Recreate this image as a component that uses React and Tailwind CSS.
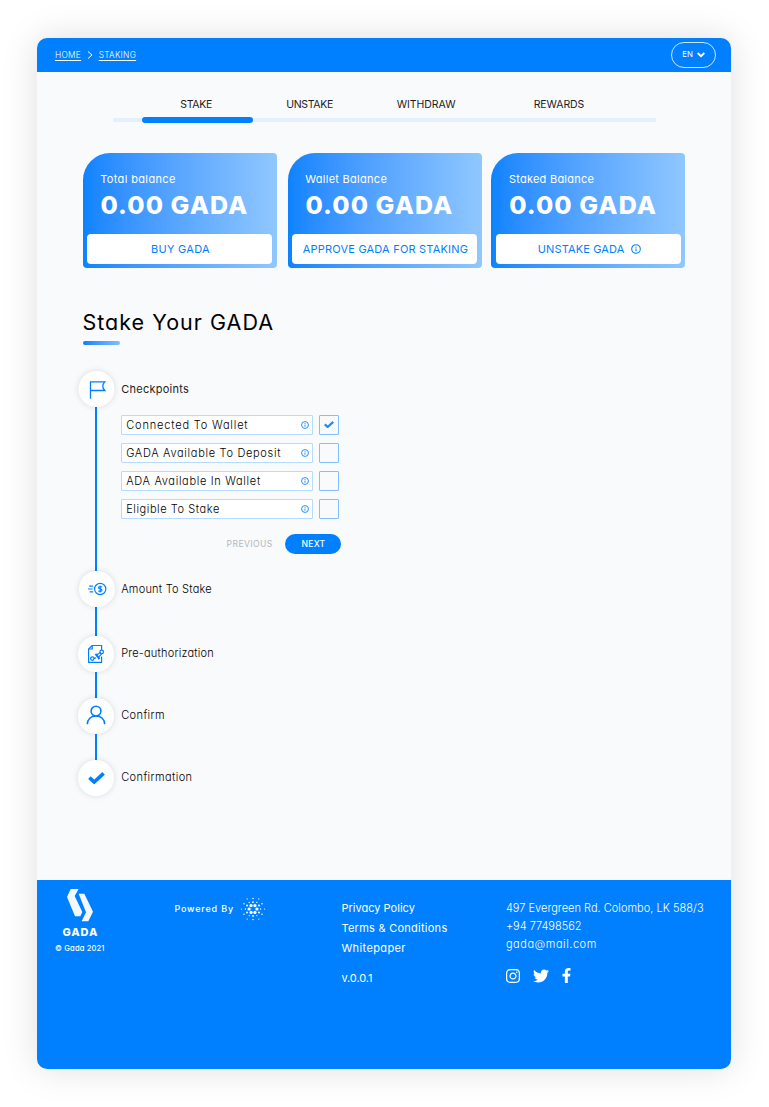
import React from "react";
import { FaInstagram, FaTwitter, FaFacebookF } from "react-icons/fa";

function InfoIcon({ className }) {
  return (
    <svg viewBox="0 0 16 16" fill="none" stroke="currentColor" className={className}>
      <circle cx="8" cy="8" r="6.9" strokeWidth="1.7" />
      <path d="M8 7.2v4.2" strokeWidth="1.8" />
      <path d="M8 4.3v1.6" strokeWidth="1.8" />
    </svg>
  );
}

function CheckIcon({ className }) {
  return (
    <svg viewBox="0 0 16 12" fill="none" stroke="currentColor" className={className}>
      <path d="M1.2 5.4L5.8 9.6L14.8 1.4" strokeWidth="3.5" />
    </svg>
  );
}

function FlagIcon() {
  return (
    <svg viewBox="0 0 18 20" fill="none" stroke="#0080ff" strokeWidth="1.3" className="h-5 w-[18px] translate-x-[1px] translate-y-[1px]">
      <path d="M2 18.8V1.9H16.3Q12.2 6.2 16.3 10.5H2" />
    </svg>
  );
}

function CoinIcon() {
  return (
    <svg viewBox="0 0 20 14" fill="none" stroke="#0080ff" strokeWidth="1.2" className="h-3.5 w-5">
      <circle cx="13.2" cy="7" r="5.6" />
      <path d="M2.2 4.2H6.2M1 7H5.6M2.6 9.8H6.2" />
      <path d="M15 5.3C14.7 4.7 14 4.5 13.2 4.5C12.2 4.5 11.5 5 11.5 5.7C11.5 7.4 15 6.5 15 8.3C15 9.1 14.2 9.5 13.2 9.5C12.3 9.5 11.6 9.2 11.4 8.6M13.2 3.5V10.5" />
    </svg>
  );
}

function DocumentIcon() {
  return (
    <svg viewBox="0 0 18 20" fill="none" stroke="#0080ff" strokeWidth="1.2" className="h-5 w-[18px]">
      <path d="M14.6 6V1.5H5.2L1.6 5V18.3H14.6V12.5" />
      <path d="M5.2 1.5V5H1.6" />
      <circle cx="5.3" cy="14.6" r="1.7" />
      <path d="M6.9 14.4L9 13.8M8.2 10.2L12.2 15.4M8.9 9.6L12.8 14.7M9.7 10.8L11.6 9.7L13.5 8.1M11.7 13L13.4 11.1L15 9.4" />
      <circle cx="14.7" cy="7.9" r="1.8" />
    </svg>
  );
}

function PersonIcon() {
  return (
    <svg viewBox="0 0 20 20" fill="none" stroke="#0080ff" strokeWidth="1.6" className="h-5 w-5 -translate-y-px">
      <circle cx="10" cy="6.1" r="4.9" />
      <path d="M1.3 19.3C1.3 14.3 5 11 10 11S18.7 14.3 18.7 19.3" />
    </svg>
  );
}

const rings = [
  { radius: 3.9, size: 1.6, count: 6, offset: 0 },
  { radius: 6.9, size: 0.95, count: 6, offset: 30 },
  { radius: 7.6, size: 0.65, count: 6, offset: 0 },
  { radius: 10.4, size: 0.75, count: 6, offset: 30 },
  { radius: 11.6, size: 0.6, count: 6, offset: 0 },
];

function CardanoLogo() {
  return (
    <svg viewBox="-13 -13 26 26" fill="white" className="h-[26px] w-[26px]">
      {rings.flatMap((ring, r) =>
        Array.from({ length: ring.count }, (_, i) => {
          const a = ((ring.offset + (360 / ring.count) * i) * Math.PI) / 180;
          return <circle key={`${r}-${i}`} cx={ring.radius * Math.cos(a)} cy={ring.radius * Math.sin(a)} r={ring.size} />;
        })
      )}
    </svg>
  );
}

function BalanceCard({ label, labelClass, action, actionClass, info }) {
  return (
    <div className="flex h-[115px] w-[194px] flex-col rounded-[4px] rounded-tl-[27px] bg-linear-to-r from-[#0a83ff] to-[#90c7ff] px-[4.5px] pt-[18px] pb-1 text-white">
      <div className={`pl-[13px] text-[11px] leading-[16px] ${labelClass}`}>{label}</div>
      <div className="mt-[3.5px] pl-[13.3px] text-[25px] leading-[28px] font-extrabold tracking-[1.1px]">0.00 GADA</div>
      <button className="mt-auto flex h-[30.5px] items-center justify-center rounded-[4px] bg-white pl-[1.5px] text-[11px] text-[#0080ff]">
        <span className={`whitespace-nowrap ${actionClass}`}>{action}</span>
        {info && <InfoIcon className="ml-[6px] h-2.5 w-2.5" />}
      </button>
    </div>
  );
}

function Checkpoint({ label, labelClass, checked }) {
  return (
    <div className="flex gap-[6px]">
      <div className="flex h-5 w-[192px] items-center justify-between rounded-[1px] border border-[#b5dcff] bg-white pr-[3.5px] pl-[4px]">
        <span className={`text-[11px] leading-[18px] font-light whitespace-nowrap text-black ${labelClass}`}>{label}</span>
        <InfoIcon className="h-2 w-2 text-[#0080ff]" />
      </div>
      <div className="flex h-5 w-[20px] items-center justify-center rounded-[1px] border border-[#80c0ff] text-[#1a8cff]">
        {checked && <CheckIcon className="h-[7.5px] w-2.5" />}
      </div>
    </div>
  );
}

function Step({ icon, label, labelClass, height, shift, last, children }) {
  return (
    <div className={`flex ${height}`}>
      <div className="flex w-9 flex-col items-center">
        <div className={`flex h-9 w-9 shrink-0 items-center justify-center rounded-full bg-white shadow-[0_0_6px_rgba(0,0,0,0.13)] ${shift}`}>{icon}</div>
        {!last && <div className="w-[2.5px] flex-1 bg-[#0080ff]" />}
      </div>
      <div className="ml-[7px]">
        <div className={`flex h-9 items-center text-[11px] whitespace-nowrap ${labelClass}`}>{label}</div>
        {children}
      </div>
    </div>
  );
}

export default function App() {
  return (
    <div className="h-[1107px] w-[769px] overflow-hidden bg-white pt-[37.5px] pl-[37.4px] font-['Inter',sans-serif] text-black [font-feature-settings:'cv11']">
      <div className="flex h-[1031.9px] w-[694px] flex-col overflow-hidden rounded-[10px] bg-[#f9fafc] shadow-[0_0_36px_rgba(0,0,0,0.13)]">
        <header className="flex h-[34.5px] shrink-0 items-center justify-between bg-[#0080ff] pr-[15px] pl-[17.5px] text-white">
          <nav className="flex items-center text-[8.3px] font-light">
            <a className="tracking-[0.35px] underline underline-offset-[1.5px]">HOME</a>
            <svg viewBox="0 0 6 8" fill="none" stroke="white" className="mr-[5.5px] ml-[6px] h-2 w-1.5">
              <path d="M1 0.5L5 4L1 7.5" />
            </svg>
            <a className="tracking-[0.3px] underline underline-offset-[1.5px]">STAKING</a>
          </nav>
          <button className="flex h-[26px] w-[45.5px] items-center justify-center gap-1 rounded-full border border-white/80 pt-px text-[7.8px]">
            <span>EN</span>
            <svg viewBox="0 0 8 6" fill="none" stroke="white" strokeWidth="1.8" className="h-1.5 w-2">
              <path d="M0.7 1L4 4.2L7.3 1" />
            </svg>
          </button>
        </header>

        <div className="mt-[24px] ml-[75.5px] w-[543.5px]">
          <div className="flex h-[17px] items-center pt-px text-[10.5px] text-[#1c1c1c]">
            <span className="w-[106px] pl-[67.4px] tracking-[-0.3px]">STAKE</span>
            <span className="w-[110.5px] pl-[67.4px] tracking-[-0.33px]">UNSTAKE</span>
            <span className="w-[136.5px] pl-[67.4px] tracking-[-0.05px]">WITHDRAW</span>
            <span className="pl-[67.8px] tracking-[-0.08px]">REWARDS</span>
          </div>
          <div className="mt-[4px] flex h-[6.5px] items-center">
            <div className="h-[4px] w-[29.5px] rounded-l-[1px] bg-[#e2effd]" />
            <div className="h-[6px] w-[111px] rounded-full bg-[#0080ff]" />
            <div className="h-[4px] flex-1 rounded-r-[1px] bg-[#e2effd]" />
          </div>
        </div>

        <div className="mt-[29.5px] ml-[45.3px] flex">
          <BalanceCard label="Total balance" labelClass="tracking-[0.36px]" action="BUY GADA" actionClass="tracking-[0.28px]" />
          <div className="w-[11px]" />
          <BalanceCard label="Wallet Balance" labelClass="tracking-[0.28px]" action="APPROVE GADA FOR STAKING" actionClass="tracking-[0.2px]" />
          <div className="w-[9.7px]" />
          <BalanceCard label="Staked Balance" labelClass="tracking-[0.25px]" action="UNSTAKE GADA" actionClass="tracking-[0.14px]" info />
        </div>

        <h1 className="mt-[40px] ml-[45px] text-[21.5px] leading-[28px] tracking-[1.02px]">Stake Your GADA</h1>
        <div className="mt-[4.5px] ml-[45.3px] h-[4.5px] w-[37px] rounded-full bg-linear-to-r from-[#0080ff] to-[#80bfff]" />

        <section className="mt-[25.5px] ml-[40.8px]">
          <Step icon={<FlagIcon />} label="Checkpoints" labelClass="pt-[1.5px] tracking-[0.25px] text-[#1c1c1c]" height="h-[200px]" shift="translate-x-[0.5px]">
            <div className="mt-[8px] flex flex-col gap-2">
              <Checkpoint label="Connected To Wallet" labelClass="tracking-[0.83px]" checked />
              <Checkpoint label="GADA Available To Deposit" labelClass="tracking-[0.69px]" />
              <Checkpoint label="ADA Available In Wallet" labelClass="tracking-[0.68px]" />
              <Checkpoint label="Eligible To Stake" labelClass="tracking-[0.57px]" />
            </div>
            <div className="-mr-[1.5px] mt-[15px] flex items-center justify-end gap-[12px] text-[8.6px]">
              <button className="pt-[1.5px] tracking-[0.4px] text-[#b4b7ba]">PREVIOUS</button>
              <button className="h-[20.5px] w-[56px] rounded-full bg-[#0080ff] pt-[1.5px] pl-[1.5px] font-medium tracking-[0.2px] text-white">NEXT</button>
            </div>
          </Step>
          <Step icon={<CoinIcon />} label="Amount To Stake" labelClass="pt-[1.5px] font-light tracking-[0.23px]" height="h-[65px]" shift="translate-x-[1px]" />
          <Step icon={<DocumentIcon />} label="Pre-authorization" labelClass="font-light tracking-[0.2px]" height="h-[62px]" shift="" />
          <Step icon={<PersonIcon />} label="Confirm" labelClass="font-light tracking-[0.4px]" height="h-[62.5px]" shift="" />
          <Step icon={<CheckIcon className="h-[12.5px] w-[17px] text-[#0080ff]" />} label="Confirmation" labelClass="font-light tracking-[0.4px] -translate-y-px pt-px" height="h-9" shift="" last />
        </section>

        <footer className="mt-auto flex h-[189.6px] shrink-0 bg-[#0080ff] text-white">
          <div className="flex w-[137px] flex-col pt-[8.5px] pl-[18px]">
            <div className="flex w-[49px] flex-col items-center">
              <svg viewBox="108 54 84 102" fill="#f2f8ff" className="h-[34px] w-7">
                <path d="M122 57H146L134 78L157 126L151 139H135L111 81Z" />
                <path d="M146 71H163L189 125L175 154H155L168 127Z" />
              </svg>
              <div className="mt-[4px] ml-px text-[11px] leading-[12px] font-extrabold tracking-[0.85px]">GADA</div>
              <div className="mt-[5.5px] text-[7.5px] leading-[9px] font-medium tracking-[0.18px] whitespace-nowrap">© Gada 2021</div>
            </div>
          </div>
          <div className="mt-[16px] flex h-[26px] w-[167px] items-center gap-[6px]">
            <span className="text-[9px] font-medium tracking-[0.83px]">Powered By</span>
            <CardanoLogo />
          </div>
          <div className="flex w-[164.5px] flex-col pt-[18.1px] text-[11px] leading-[20px]">
            <a className="tracking-[0.02px]">Privacy Policy</a>
            <a className="tracking-[0.26px]">Terms &amp; Conditions</a>
            <a className="tracking-[0.38px]">Whitepaper</a>
            <span className="mt-[10px] tracking-[-0.08px]">v.0.0.1</span>
          </div>
          <div className="flex flex-col pt-[19.1px] text-[11px] leading-[18px] font-light whitespace-nowrap">
            <span className="tracking-[0.02px]">497 Evergreen Rd. Colombo, LK 588/3</span>
            <span className="tracking-[-0.02px]">+94 77498562</span>
            <span className="tracking-[0.54px]">gada@mail.com</span>
            <div className="mt-[15px] flex items-center">
              <FaInstagram className="-ml-[0.5px] h-4 w-4" />
              <FaTwitter className="ml-[11.5px] h-4 w-4" />
              <FaFacebookF className="ml-[10px] h-[15px] w-[15px]" />
            </div>
          </div>
        </footer>
      </div>
    </div>
  );
}
